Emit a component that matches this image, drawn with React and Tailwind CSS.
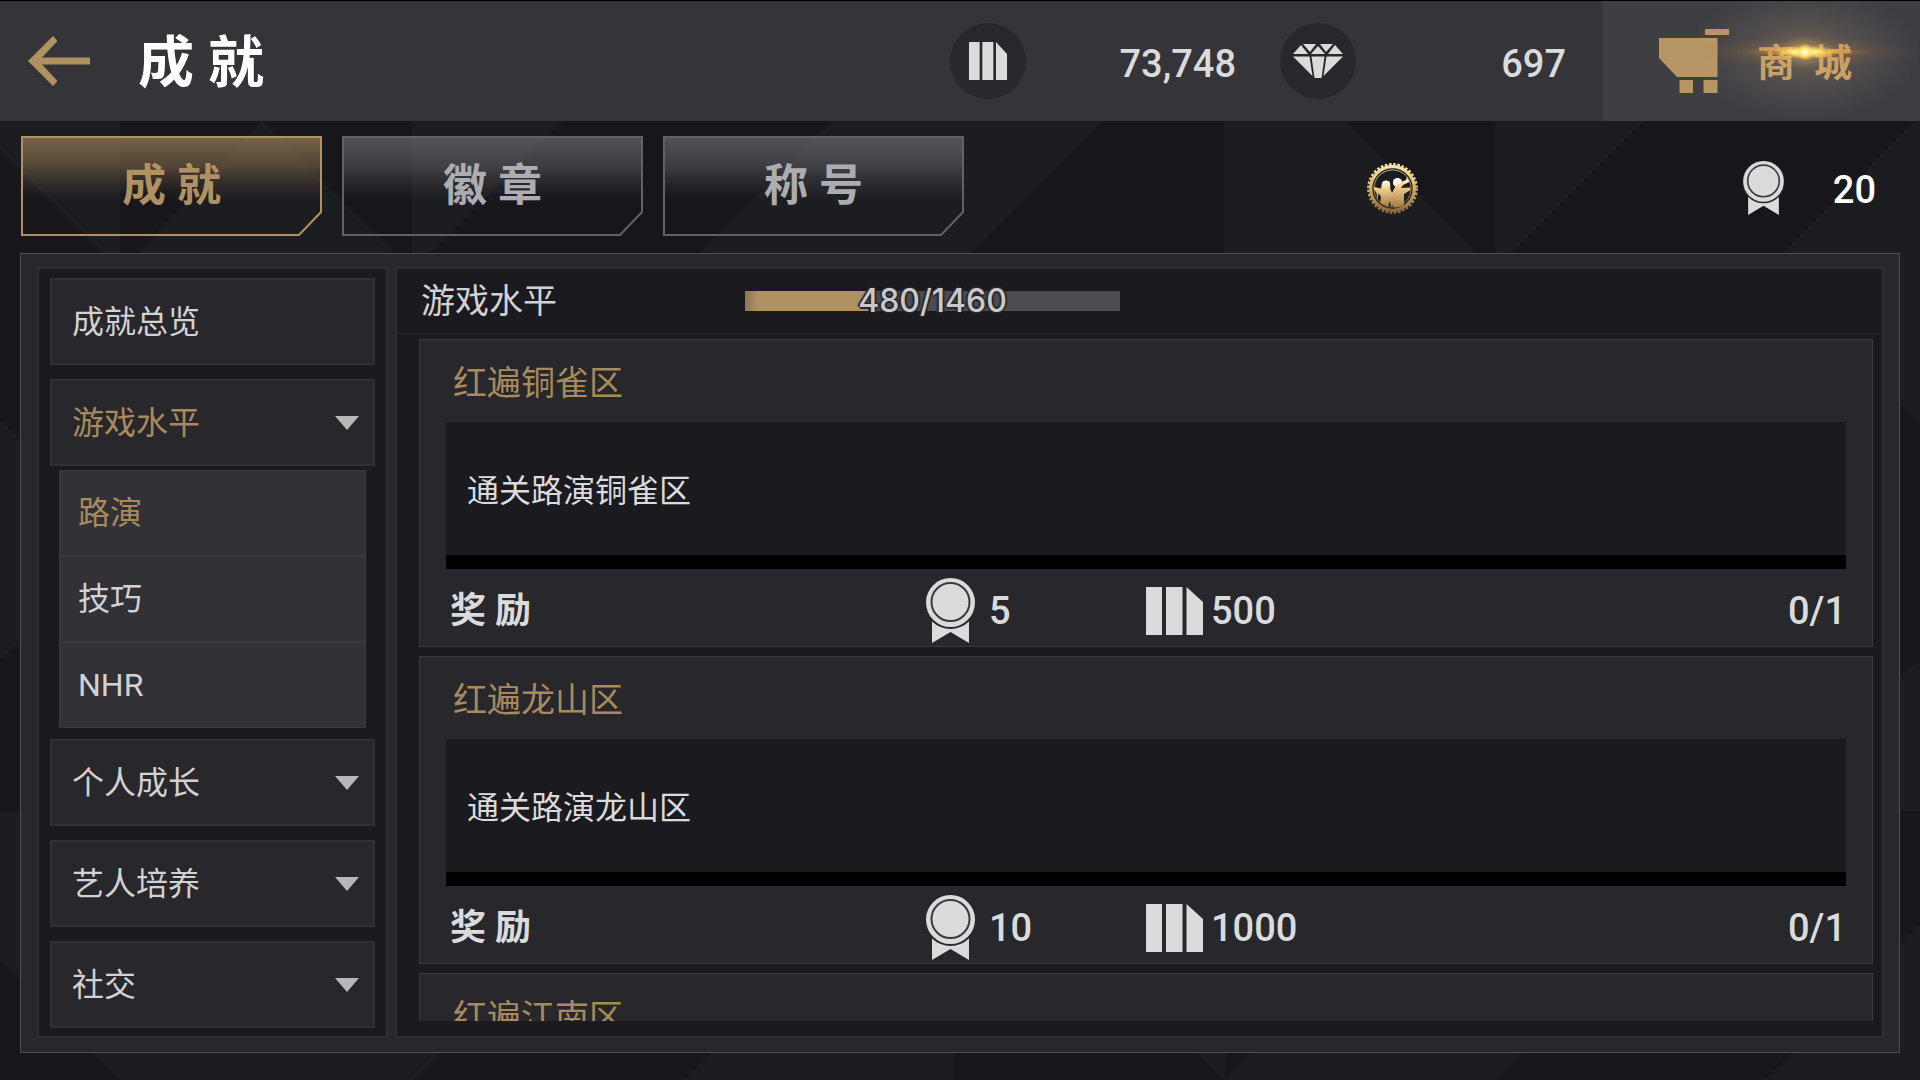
/**
 * Achievements screen
 *
 * Main Functionality:
 *   - Top bar with back button, wallet and shop entry
 *   - Tabs (achievements / badges / titles) with the player's rank
 *   - Category sidebar with one expandable group
 *   - Achievement cards with rewards and progress
 */

import { useState } from 'react';

const TABS = ['成 就', '徽 章', '称 号'];

const CATEGORIES = [
  { name: '成就总览' },
  { name: '游戏水平', children: ['路演', '技巧', 'NHR'] },
  { name: '个人成长', children: [] },
  { name: '艺人培养', children: [] },
  { name: '社交', children: [] },
];

const ACHIEVEMENTS = [
  { title: '红遍铜雀区', desc: '通关路演铜雀区', medals: 5, coins: 500, progress: '0/1' },
  { title: '红遍龙山区', desc: '通关路演龙山区', medals: 10, coins: 1000, progress: '0/1' },
  { title: '红遍江南区' },
];

/* ---------- Icons ---------- */

const BackArrow = () => (
  <svg viewBox="0 0 62 50" className="w-[62px] h-[50px]" aria-hidden="true">
    <path
      d="M25 0 L29.500 5 L14 21.500 H62 V28.500 H14 L29.500 45 L25 50 L0 25 Z"
      fill="#b09162"
    />
  </svg>
);

const CoinIcon = ({ className }) => (
  <svg viewBox="0 0 57 48" preserveAspectRatio="none" className={className} aria-hidden="true">
    <path d="M0 0H16V48H0Z M20 0H36.500V48H20Z M40.500 0L57 15V48H40.500Z" fill="#dadbdd" />
  </svg>
);

const DiamondIcon = () => (
  <svg viewBox="0 0 50 34" className="w-[50px] h-[34px]" aria-hidden="true">
    <g fill="#dadbdd">
      <path d="M8 1L15 10H0Z" />
      <path d="M10 0H23L17 8Z" />
      <path d="M25 2L32 10H18Z" />
      <path d="M27 0H40L33 8Z" />
      <path d="M42 1L50 10H35Z" />
      <path d="M0 12.500H16.500L19.500 32Z" />
      <path d="M18.500 12.500H31.500L28.500 34H21.500Z" />
      <path d="M33.500 12.500H50L30.500 32Z" />
    </g>
  </svg>
);

const MedalIcon = ({ className }) => (
  <svg viewBox="0 0 49 65" className={className} aria-hidden="true">
    <path d="M6 40H43V65L24.500 54L6 65Z" fill="#dadbdd" />
    <circle cx="24.500" cy="25" r="26" fill="#28272b" />
    <circle cx="24.500" cy="24.500" r="24.500" fill="#dadbdd" />
    <circle cx="24.500" cy="24" r="19" fill="none" stroke="#3b3a3f" strokeWidth="2" />
  </svg>
);

const CartIcon = () => (
  <svg viewBox="0 0 70 64" className="w-[70px] h-[64px]" aria-hidden="true">
    <path
      d="M46 0H70V6H46Z M0 9H58.500V48H18L0 29Z M20.500 51H34V64H20.500Z M44.500 51H58.500V64H44.500Z"
      fill="#b89564"
    />
  </svg>
);

const RankBadge = () => (
  <svg viewBox="0 0 51 51" className="w-[51px] h-[51px]" role="img" aria-label="段位">
    <defs>
      <linearGradient id="gold" x1="0" y1="0" x2="0" y2="1">
        <stop offset="0" stopColor="#f7e6a8" />
        <stop offset="0.45" stopColor="#dcb56c" />
        <stop offset="1" stopColor="#8f6b3d" />
      </linearGradient>
      <linearGradient id="duo" x1="0" y1="0" x2="0" y2="1">
        <stop offset="0" stopColor="#fffdf0" />
        <stop offset="0.3" stopColor="#f0d08c" />
        <stop offset="1" stopColor="#a37a42" />
      </linearGradient>
    </defs>
    <circle cx="25.500" cy="25.500" r="23.900" fill="none" stroke="url(#gold)" strokeWidth="3" strokeDasharray="2.500 1.670" />
    <circle cx="25.500" cy="25.500" r="21.800" fill="none" stroke="url(#gold)" strokeWidth="3.200" />
    <circle cx="25.500" cy="25.500" r="18.600" fill="none" stroke="url(#gold)" strokeWidth="0.800" />
    {/* singer on the left */}
    <path
      fill="url(#duo)"
      d="M7 24L14 25.500L15 20C15.500 17 22 16.500 23 20L23.500 27L26 31V42L24 44L23 38L21 44L13 40L14 34L11.500 30L10.500 37L9.500 30L7 26Z"
    />
    {/* singer on the right, arm and microphone raised */}
    <circle cx="30.500" cy="19.500" r="4.600" fill="#fffbe8" />
    <path
      fill="url(#duo)"
      d="M34 19L39 17L40 14L42.500 19L36 22L34 25L43 24.500L43.500 27L37 31V42C33 45 28 45 26 43.500L25 30L28 24Z"
    />
  </svg>
);

const Triangle = () => (
  <svg viewBox="0 0 24 14" className="w-6 h-3.5" aria-hidden="true">
    <path d="M0 0H24L12 14Z" fill="#b7b7b8" />
  </svg>
);

/* ---------- Decoration ---------- */

const Backdrop = () => (
  <svg
    viewBox="0 0 1920 1080"
    preserveAspectRatio="none"
    className="absolute inset-0 w-full h-full"
    aria-hidden="true"
  >
    <g fill="#1c1d21">
      <path d="M0 121H120V253H103L0 150Z" />
      <path d="M262 121L395 253H138Z" />
      <path d="M412 121H562L430 253H412Z" />
      <path d="M833 121H1103L972 253H700Z" />
      <path d="M1224 121H1345L1477 253H1224Z" />
      <path d="M1495 121H1643L1511 253H1495Z" />
      <path d="M1915 121H1920V425L1900 405V253H1783Z" />
      <path d="M0 420L20 440V642L0 660Z" />
      <path d="M0 811H20V978L0 960Z" />
      <path d="M1920 660V811H1900V675Z" />
      <path d="M1920 925V1080H1765L1793 1053H1900V945Z" />
      <path d="M93 1053H441L414 1080H120Z" />
      <path d="M711 1053H953V1080H685Z" />
      <path d="M1196 1053H1225V1080Z" />
      <path d="M1252 1053H1522L1495 1080H1225Z" />
    </g>
  </svg>
);

// Frame with the bottom-right corner cut off
const TabFrame = ({ active, id }) => (
  <svg viewBox="0 0 301 100" className="absolute inset-0 w-full h-full" aria-hidden="true">
    <defs>
      <linearGradient id={id} x1="0" y1="0" x2="0" y2="1">
        <stop offset="0" stopColor={active ? '#b09162' : '#77767b'} stopOpacity="0.62" />
        <stop offset="0.3" stopColor={active ? '#a8875e' : '#77767b'} stopOpacity="0.4" />
        <stop offset="0.65" stopColor={active ? '#6a5046' : '#56555a'} stopOpacity="0" />
      </linearGradient>
    </defs>
    <path
      d="M1 1H300V76L278 99H1Z"
      fill={`url(#${id})`}
      stroke={active ? '#b09162' : '#626166'}
      strokeWidth="2"
    />
  </svg>
);

// Lens flare over the shop label
const Flare = () => (
  <svg viewBox="0 0 318 120" preserveAspectRatio="none" className="absolute inset-0 w-full h-full pointer-events-none" aria-hidden="true">
    <defs>
      <radialGradient id="halo">
        <stop offset="0" stopColor="#ffd98a" stopOpacity="0.55" />
        <stop offset="0.25" stopColor="#e0bc88" stopOpacity="0.2" />
        <stop offset="1" stopColor="#8a857c" stopOpacity="0" />
      </radialGradient>
      <radialGradient id="streak">
        <stop offset="0" stopColor="#ffc95a" stopOpacity="0.95" />
        <stop offset="0.4" stopColor="#e59a3a" stopOpacity="0.4" />
        <stop offset="1" stopColor="#b0703a" stopOpacity="0" />
      </radialGradient>
      <radialGradient id="core">
        <stop offset="0" stopColor="#ffffff" />
        <stop offset="0.4" stopColor="#fff07a" stopOpacity="0.9" />
        <stop offset="1" stopColor="#ffb938" stopOpacity="0" />
      </radialGradient>
    </defs>
    <ellipse cx="203" cy="51" rx="115" ry="68" fill="url(#halo)" />
    <ellipse cx="203" cy="51" rx="115" ry="16" fill="url(#streak)" opacity="0.4" />
    <ellipse cx="203" cy="51" rx="70" ry="4" fill="url(#streak)" />
    <ellipse cx="203" cy="51" rx="34" ry="7" fill="url(#core)" />
    <circle cx="203" cy="51" r="9" fill="url(#core)" />
  </svg>
);

/* ---------- Sections ---------- */

const Wallet = ({ icon, label, value }) => (
  <div className="flex items-center justify-between w-[286px]" aria-label={label}>
    <span className="flex items-center justify-center size-[76px] rounded-full bg-[#28272b]">
      {icon}
    </span>
    <span className="pt-1.5 text-[38px] leading-none font-medium text-[#dadbdd]">{value}</span>
  </div>
);

const TopBar = () => (
  <header className="flex items-stretch h-[121px] border-t border-black bg-[#353439]">
    <div className="flex flex-1 items-center pl-7">
      <button aria-label="返回">
        <BackArrow />
      </button>
      <h1 className="ml-12 pt-1 text-[56px] leading-none font-bold text-white">成 就</h1>
    </div>
    <div className="flex items-center gap-11 mr-9">
      <Wallet label="金币" value="73,748" icon={<CoinIcon className="w-[38px] h-[38px]" />} />
      <Wallet label="钻石" value="697" icon={<DiamondIcon />} />
    </div>
    <button className="relative flex items-center w-[318px] pl-[57px] bg-[#3f3e43]">
      <CartIcon />
      <span className="ml-7 pt-1 whitespace-pre text-[38px] leading-none font-bold text-[#c99d60]">商  城</span>
      <Flare />
    </button>
  </header>
);

const TabRow = ({ tab, onSelect }) => (
  <div className="flex items-center justify-between pl-[21px] pr-11 pt-[15px] pb-[17px]">
    <nav className="flex gap-5">
      {TABS.map((name, i) => (
        <button
          key={name}
          onClick={() => onSelect(i)}
          className={`relative w-[301px] h-[100px] text-[44px] leading-none font-bold ${
            i === tab ? 'text-[#b09162]' : 'text-[#acacb1]'
          }`}
        >
          <TabFrame active={i === tab} id={`tab-${i}`} />
          <span className="relative">{name}</span>
        </button>
      ))}
    </nav>
    <div className="flex items-center justify-between w-[509px] pt-1">
      <RankBadge />
      <div className="flex items-center justify-between w-[133px]">
        <MedalIcon className="w-[41px] h-[54px]" />
        <span className="pt-1 text-[38px] leading-none font-medium text-white">20</span>
      </div>
    </div>
  </div>
);

const Sidebar = ({ open, onToggle }) => {
  const [sub, setSub] = useState('路演');

  return (
    <aside className="w-[351px] shrink-0 overflow-hidden border-2 border-[#2e2d31] bg-[#1b1a1e] px-[11px] pt-[9px]">
      {CATEGORIES.map(({ name, children }) => (
        <div key={name} className="mb-3.5">
          <button
            onClick={() => onToggle(name)}
            className={`flex items-center justify-between w-full h-[87px] pl-5 pr-3.5 border-2 border-[#313034] bg-[#28272b] text-[32px] leading-none ${
              name === open ? 'text-[#a98a5d]' : 'text-[#d2d2d5]'
            }`}
          >
            {name}
            {children && <Triangle />}
          </button>
          {name === open && children?.length > 0 && (
            <ul className="mt-1 -mb-[3px] mx-[9px]">
              {children.map((child) => (
                <li key={child}>
                  <button
                    onClick={() => setSub(child)}
                    className={`flex items-center w-full h-[86px] pl-[18px] border border-[#3b3a3f] bg-[#323136] text-[32px] leading-none ${
                      child === sub ? 'text-[#a98a5d]' : 'text-[#d2d2d5]'
                    }`}
                  >
                    {child}
                  </button>
                </li>
              ))}
            </ul>
          )}
        </div>
      ))}
    </aside>
  );
};

const ProgressBar = ({ value, max }) => (
  <div
    role="progressbar"
    aria-label="游戏水平"
    aria-valuenow={value}
    aria-valuemax={max}
    className="relative flex items-center justify-center w-[375px] h-5 bg-[#4d4c51]"
  >
    <div
      className="absolute inset-y-0 left-0 bg-linear-to-r from-[#8a7558] to-[#b09162] to-10%"
      style={{ width: `${(value / max) * 100}%` }}
    />
    <span className="relative text-[32px] leading-none font-medium text-[#c9c9cc] font-['Inter','Noto_Sans_CJK_SC',sans-serif] [text-shadow:2px_0_1px_#28272b,-2px_0_1px_#28272b,0_2px_1px_#28272b,0_-2px_1px_#28272b]">
      {value}/{max}
    </span>
  </div>
);

const AchievementCard = ({ title, desc, medals, coins, progress }) => (
  <article className="shrink-0 px-[26px] border border-[#3b3a3f] bg-[#28272b] text-[#dadbdd]">
    <h3 className="flex items-center h-[82px] pt-1 pl-[7px] text-[34px] leading-none text-[#a98a5d]">{title}</h3>
    {desc && (
      <>
        <p className="flex items-center h-[147px] pt-1 pl-[21px] border-b-14 border-black bg-[#1b1a1e] text-[32px] leading-none">
          {desc}
        </p>
        <div className="grid grid-cols-[24fr_11fr_35fr] items-center h-[77px] pt-1.5">
          <span className="pl-1 text-[36px] leading-none font-bold">奖 励</span>
          <span className="flex items-center gap-3.5 text-[38px] leading-none font-medium">
            <MedalIcon className="w-[49px] h-[65px]" />
            {medals}
          </span>
          <span className="flex items-center justify-between text-[38px] leading-none font-medium">
            <span className="flex items-center gap-2">
              <CoinIcon className="w-[57px] h-[48px]" />
              {coins}
            </span>
            <span>{progress}</span>
          </span>
        </div>
      </>
    )}
  </article>
);

export default function App() {
  const [tab, setTab] = useState(0);
  const [open, setOpen] = useState('游戏水平');

  return (
    <div className="relative h-screen overflow-hidden bg-[#17161b] font-['Roboto','Noto_Sans_CJK_SC',sans-serif]">
      <Backdrop />
      <div className="relative flex flex-col h-full">
        <TopBar />
        <TabRow tab={tab} onSelect={setTab} />
        <main className="flex flex-1 min-h-0 gap-[7px] mx-5 mb-[27px] pl-4 pr-[15px] pt-[13px] pb-3.5 border border-[#515055] bg-[#28272b]">
          <Sidebar open={open} onToggle={setOpen} />
          <section className="flex flex-col flex-1 min-w-0 border-2 border-[#2e2d31] bg-[#1b1a1e]">
            <div className="flex items-center h-[65px] pl-6 border-b border-[#28272b]">
              <h2 className="w-[324px] text-[34px] leading-none text-[#d2d2d5]">游戏水平</h2>
              <ProgressBar value={480} max={1460} />
            </div>
            <div className="flex flex-col flex-1 min-h-0 gap-[9px] mt-[5px] mb-[15px] ml-[22px] mr-[9px] overflow-hidden">
              {ACHIEVEMENTS.map((item) => (
                <AchievementCard key={item.title} {...item} />
              ))}
            </div>
          </section>
        </main>
      </div>
    </div>
  );
}
